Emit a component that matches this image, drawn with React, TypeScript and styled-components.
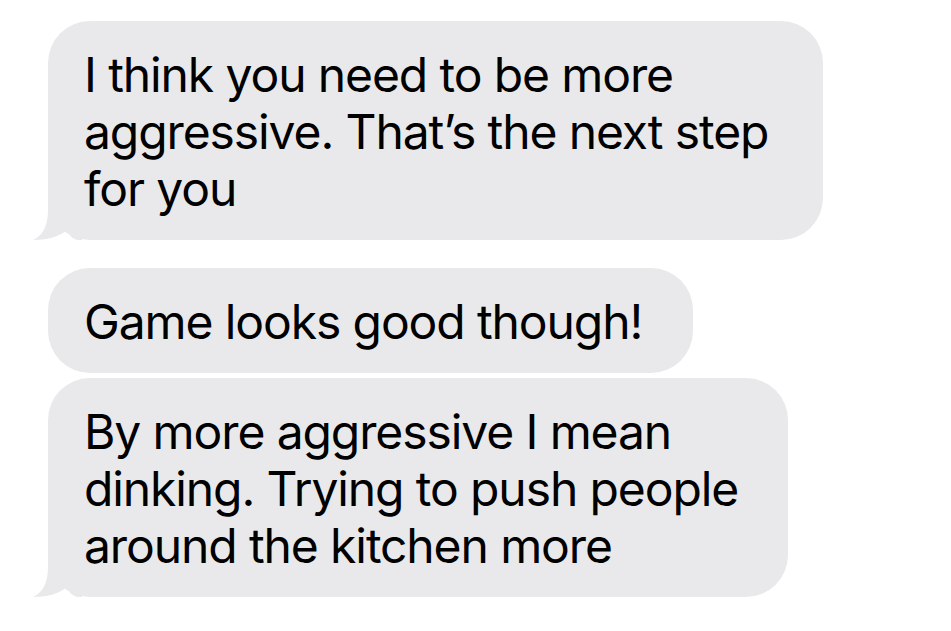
import React from "react";
import styled, { createGlobalStyle } from "styled-components";

const GlobalStyle = createGlobalStyle`
  html, body {
    margin: 0;
    padding: 0;
    background: #ffffff;
  }
  body {
    font-family: "Inter", "Liberation Sans", Arial, sans-serif;
    -webkit-font-smoothing: antialiased;
  }
`;

const BUBBLE_GRAY = "#e9e9eb";

const Thread = styled.main`
  display: flex;
  flex-direction: column;
  align-items: flex-start;
  padding: 21px 0 0 48px;
  width: 951px;
  height: 631px;
  box-sizing: border-box;
  background: #ffffff;
`;

const Bubble = styled.div<{ $width: number; $gapAfter: number }>`
  position: relative;
  box-sizing: border-box;
  width: ${(p) => p.$width}px;
  margin-bottom: ${(p) => p.$gapAfter}px;
  padding: 25px 20px 23px 36px;
  background: ${BUBBLE_GRAY};
  border-radius: 42px;
  color: #000000;
  font-family: "Inter", "Liberation Sans", Arial, sans-serif;
  font-size: 48px;
  line-height: 57px;
  letter-spacing: -1.1px;
  font-weight: 400;
  white-space: nowrap;
`;

const TailSvg = styled.svg`
  position: absolute;
  left: -16px;
  bottom: 0;
  width: 50px;
  height: 40px;
  display: block;
`;

const Tail = () => (
  <TailSvg viewBox="0 0 50 40" aria-hidden="true">
    <path
      d="M16 0 L16 10 C16 27 10 36 1 40 C14 40 27 37 35 30 C37 35 40 39 46 40 L50 40 L50 0 Z"
      fill={BUBBLE_GRAY}
    />
  </TailSvg>
);

type Msg = { lines: string[]; width: number; gapAfter: number; tail: boolean };

const messages: Msg[] = [
  {
    lines: [
      "I think you need to be more",
      "aggressive. That\u2019s the next step",
      "for you",
    ],
    width: 775,
    gapAfter: 28,
    tail: true,
  },
  {
    lines: ["Game looks good though!"],
    width: 645,
    gapAfter: 5,
    tail: false,
  },
  {
    lines: [
      "By more aggressive I mean",
      "dinking. Trying to push people",
      "around the kitchen more",
    ],
    width: 740,
    gapAfter: 0,
    tail: true,
  },
];

export default function App() {
  return (
    <>
      <GlobalStyle />
      <Thread>
        {messages.map((m, i) => (
          <Bubble key={i} $width={m.width} $gapAfter={m.gapAfter}>
            {m.lines.map((l, j) => (
              <React.Fragment key={j}>
                {l}
                {j < m.lines.length - 1 && <br />}
              </React.Fragment>
            ))}
            {m.tail && <Tail />}
          </Bubble>
        ))}
      </Thread>
    </>
  );
}
